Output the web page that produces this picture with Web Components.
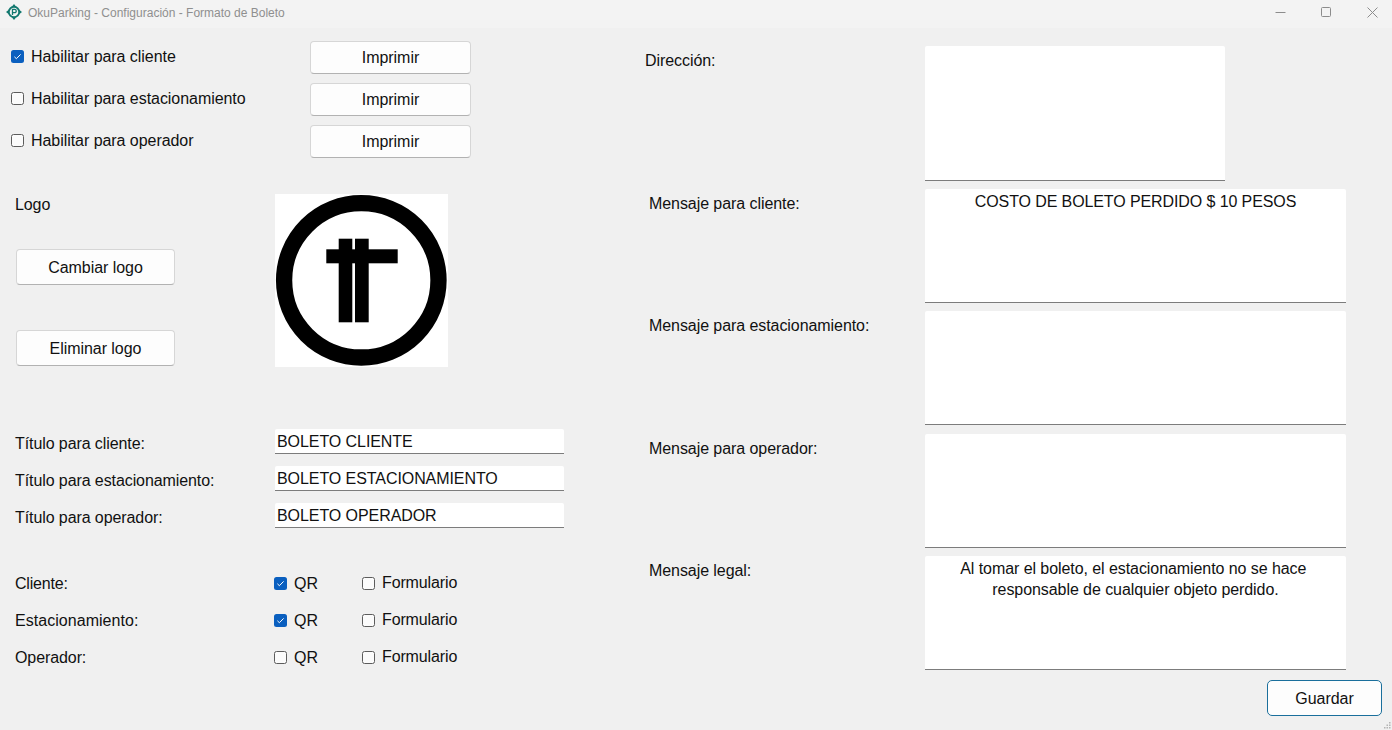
<!DOCTYPE html>
<html lang="es"><head><meta charset="utf-8"><title>OkuParking</title>
<style>
html,body{margin:0;padding:0;background:#f0f0f0}
body{width:1392px;height:730px;overflow:hidden;font-family:"Liberation Sans",Arial,sans-serif;color:#111}
</style></head><body>
<ok-window>
  <ok-titlebar slot="title">OkuParking - Configuración - Formato de Boleto</ok-titlebar>
  <ok-left slot="left"></ok-left>
  <ok-right slot="right"></ok-right>
</ok-window>
<script>
const def=(name,html)=>customElements.define(name,class extends HTMLElement{
  constructor(){super();this.attachShadow({mode:'open'}).innerHTML=html;}
});
def('ok-window',`<style>
:host{display:flex;flex-direction:column;width:1392px;height:730px;position:relative;overflow:hidden;background:#f0f0f0}
.main{display:flex;flex:1;min-height:0}
.grip{position:absolute;right:1px;bottom:1px}
</style><slot name="title"></slot><div class="main"><slot name="left"></slot><slot name="right"></slot></div>
<svg class="grip" width="7" height="7" viewBox="0 0 7 7" fill="#b4b4b4"><rect x="5" y="0" width="1.5" height="1.5"/><rect x="2.5" y="2.5" width="1.5" height="1.5"/><rect x="5" y="2.5" width="1.5" height="1.5"/><rect x="0" y="5" width="1.5" height="1.5"/><rect x="2.5" y="5" width="1.5" height="1.5"/><rect x="5" y="5" width="1.5" height="1.5"/></svg>`);
def('ok-titlebar',`<style>
:host{display:flex;align-items:center;height:28px;background:#f3f3f3;color:#8f8f8f;flex:none;padding-bottom:3px;box-sizing:border-box}
svg.logo{margin:0 6px 1px 6px;flex:none}
.t{flex:1;font:12px "Liberation Sans",Arial,sans-serif}
.b{width:46px;display:flex;justify-content:flex-end;box-sizing:border-box;padding-right:14px}
.ctl{display:flex}
svg{display:block}
</style>
<svg class="logo" width="16" height="16" viewBox="0 0 16 16" fill="none" stroke="#12786f"><circle cx="8" cy="8" r="5.2" stroke-width="1.9"/><path d="M8 0 10.2 2.8H5.8ZM8 16 10.2 13.2H5.8ZM0 8 2.8 5.8V10.2ZM16 8 13.2 5.8V10.2Z" fill="#12786f" stroke="none"/><path d="M6.5 11V5.4H8.6a1.6 1.6 0 0 1 0 3.3H6.5" stroke-width="1.3"/></svg>
<span class="t"><slot></slot></span>
<div class="ctl">
<div class="b"><svg width="11" height="11"><path d="M.5 5.5h10" stroke="#8c8c8c"/></svg></div>
<div class="b"><svg width="11" height="11"><rect x=".5" y=".5" width="9" height="9" rx="1" fill="none" stroke="#8c8c8c"/></svg></div>
<div class="b"><svg width="11" height="11"><path d="M.5.5l10 10M10.5.5l-10 10" stroke="#8c8c8c"/></svg></div>
</div>`);
const CHK='<svg viewBox="0 0 13 13" width="13" height="13"><path d="M3.4 6.8 5.4 8.7 9.6 4.4" fill="none" stroke="#fff" stroke-width="1"/></svg>';
class OkCheck extends HTMLElement{
  constructor(){super();const r=this.attachShadow({mode:'open'});
  r.innerHTML=`<style>
  :host{display:inline-flex;align-items:center;gap:7px;font-size:16px;white-space:nowrap;letter-spacing:-.05px}
  :host(.f){letter-spacing:-.13px}
  :host(.q) .box{margin-top:-2px}
  .box{width:11px;height:11px;border:1px solid #5c5c5c;border-radius:2.5px;background:#fbfbfb;flex:none}
  :host([checked]) .box{width:13px;height:13px;border:0;background:#0a5fbf}
  .box svg{display:block}
  </style><span class="box">${this.hasAttribute('checked')?CHK:''}</span><span><slot></slot></span>`;}
}
customElements.define('ok-check',OkCheck);
def('ok-button',`<style>
:host{display:flex;align-items:center;justify-content:center;box-sizing:border-box;background:#fdfdfd;border:1px solid #d6d6d6;border-bottom-color:#b2b2b2;border-radius:4px;font-size:16px;letter-spacing:-.05px;color:#111;flex:none}
:host([primary]){border:1.5px solid #1a6f9c;border-radius:5px}
:host([low]){padding-top:2px}
</style><slot></slot>`);
def('ok-field',`<style>
:host{display:block;box-sizing:border-box;background:#fff;border-bottom:1px solid #7c7c7c;border-radius:2px 2px 0 0;font-size:16px;letter-spacing:-.07px;color:#111;line-height:19px;flex:none}
:host(.costo){letter-spacing:-.1px}
:host(.legal){letter-spacing:-.07px;line-height:21px;padding-top:2px !important}
</style><slot></slot>`);
def('ok-left',`<style>
:host{display:flex;flex-direction:column;width:640px;flex:none;box-sizing:border-box;padding:13px 0 0 0;font-size:16px;letter-spacing:-.09px}
.top{display:grid;grid-template-columns:299px 161px;grid-auto-rows:33px;row-gap:9px;padding-left:11px;align-items:center}
.top ok-check{position:relative;top:-1px}
ok-button.p{height:33px}
.logo{display:grid;grid-template-columns:260px 173px;padding-left:15px;margin-top:36px}
.lc{display:flex;flex-direction:column}
.lc span{line-height:19px;margin-top:1px}
.lc ok-button{width:159px;height:36px;margin-left:1px}
.lc .a{margin-top:35px}.lc .b{margin-top:45px}
.lgo{display:block;background:#fff}
.titles{display:grid;grid-template-columns:260px 289px;grid-auto-rows:25px;row-gap:12px;padding-left:15px;margin-top:62px;align-items:center}
.titles span{position:relative;top:2px}
.titles ok-field{height:25px;padding:3px 2px 0}
.opts{display:grid;grid-template-columns:259px 88px 120px;grid-auto-rows:19px;row-gap:18px;padding-left:15px;margin-top:46px;align-items:center}
.opts ok-check{margin-top:-1px}
.opts ok-check.q{margin-top:1px}
.c{letter-spacing:-.2px}.e{letter-spacing:.04px}
</style>
<div class="top">
<ok-check checked>Habilitar para cliente</ok-check><ok-button class="p">Imprimir</ok-button>
<ok-check>Habilitar para estacionamiento</ok-check><ok-button class="p">Imprimir</ok-button>
<ok-check>Habilitar para operador</ok-check><ok-button class="p">Imprimir</ok-button>
</div>
<div class="logo">
<div class="lc"><span>Logo</span><ok-button class="a" low>Cambiar logo</ok-button><ok-button class="b" low>Eliminar logo</ok-button></div>
<svg class="lgo" width="173" height="173" viewBox="0 0 173 173"><circle cx="86.3" cy="86.3" r="77.2" fill="none" stroke="#000" stroke-width="16.3"/><rect x="63.7" y="44.7" width="13.6" height="83.6"/><rect x="80" y="44.7" width="13.7" height="83.6"/><rect x="51.3" y="55.3" width="71.4" height="14"/></svg>
</div>
<div class="titles">
<span>Título para cliente:</span><ok-field>BOLETO CLIENTE</ok-field>
<span>Título para estacionamiento:</span><ok-field>BOLETO ESTACIONAMIENTO</ok-field>
<span>Título para operador:</span><ok-field>BOLETO OPERADOR</ok-field>
</div>
<div class="opts">
<span class="c">Cliente:</span><ok-check class="q" checked>QR</ok-check><ok-check class="f">Formulario</ok-check>
<span class="e">Estacionamiento:</span><ok-check class="q" checked>QR</ok-check><ok-check class="f">Formulario</ok-check>
<span>Operador:</span><ok-check class="q">QR</ok-check><ok-check class="f">Formulario</ok-check>
</div>`);
def('ok-right',`<style>
:host{display:flex;flex-direction:column;flex:1;box-sizing:border-box;padding:18px 0 0 9px;font-size:16px;letter-spacing:-.07px}
.r{display:grid;grid-template-columns:276px 421px;margin-bottom:8px}
.r>span{padding-top:5px;line-height:19px}
.r ok-field{height:114px;padding:3px 12px;text-align:center}
.n{margin-bottom:9px}
.d{grid-template-columns:280px 300px;margin:0 0 8px -4px}
.d ok-field{height:135px}
.f{display:flex;justify-content:flex-end;padding-right:10px;margin-top:2px}
ok-button{width:115px;height:36px}
</style>
<div class="r d"><span>Dirección:</span><ok-field></ok-field></div>
<div class="r"><span>Mensaje para cliente:</span><ok-field class="costo">COSTO DE BOLETO PERDIDO $ 10 PESOS</ok-field></div>
<div class="r n"><span>Mensaje para estacionamiento:</span><ok-field></ok-field></div>
<div class="r"><span>Mensaje para operador:</span><ok-field></ok-field></div>
<div class="r"><span>Mensaje legal:</span><ok-field class="legal">Al tomar el boleto, el estacionamiento no se hace&nbsp;<br>responsable de cualquier objeto perdido.</ok-field></div>
<div class="f"><ok-button primary low>Guardar</ok-button></div>`);
</script>
</body></html>
